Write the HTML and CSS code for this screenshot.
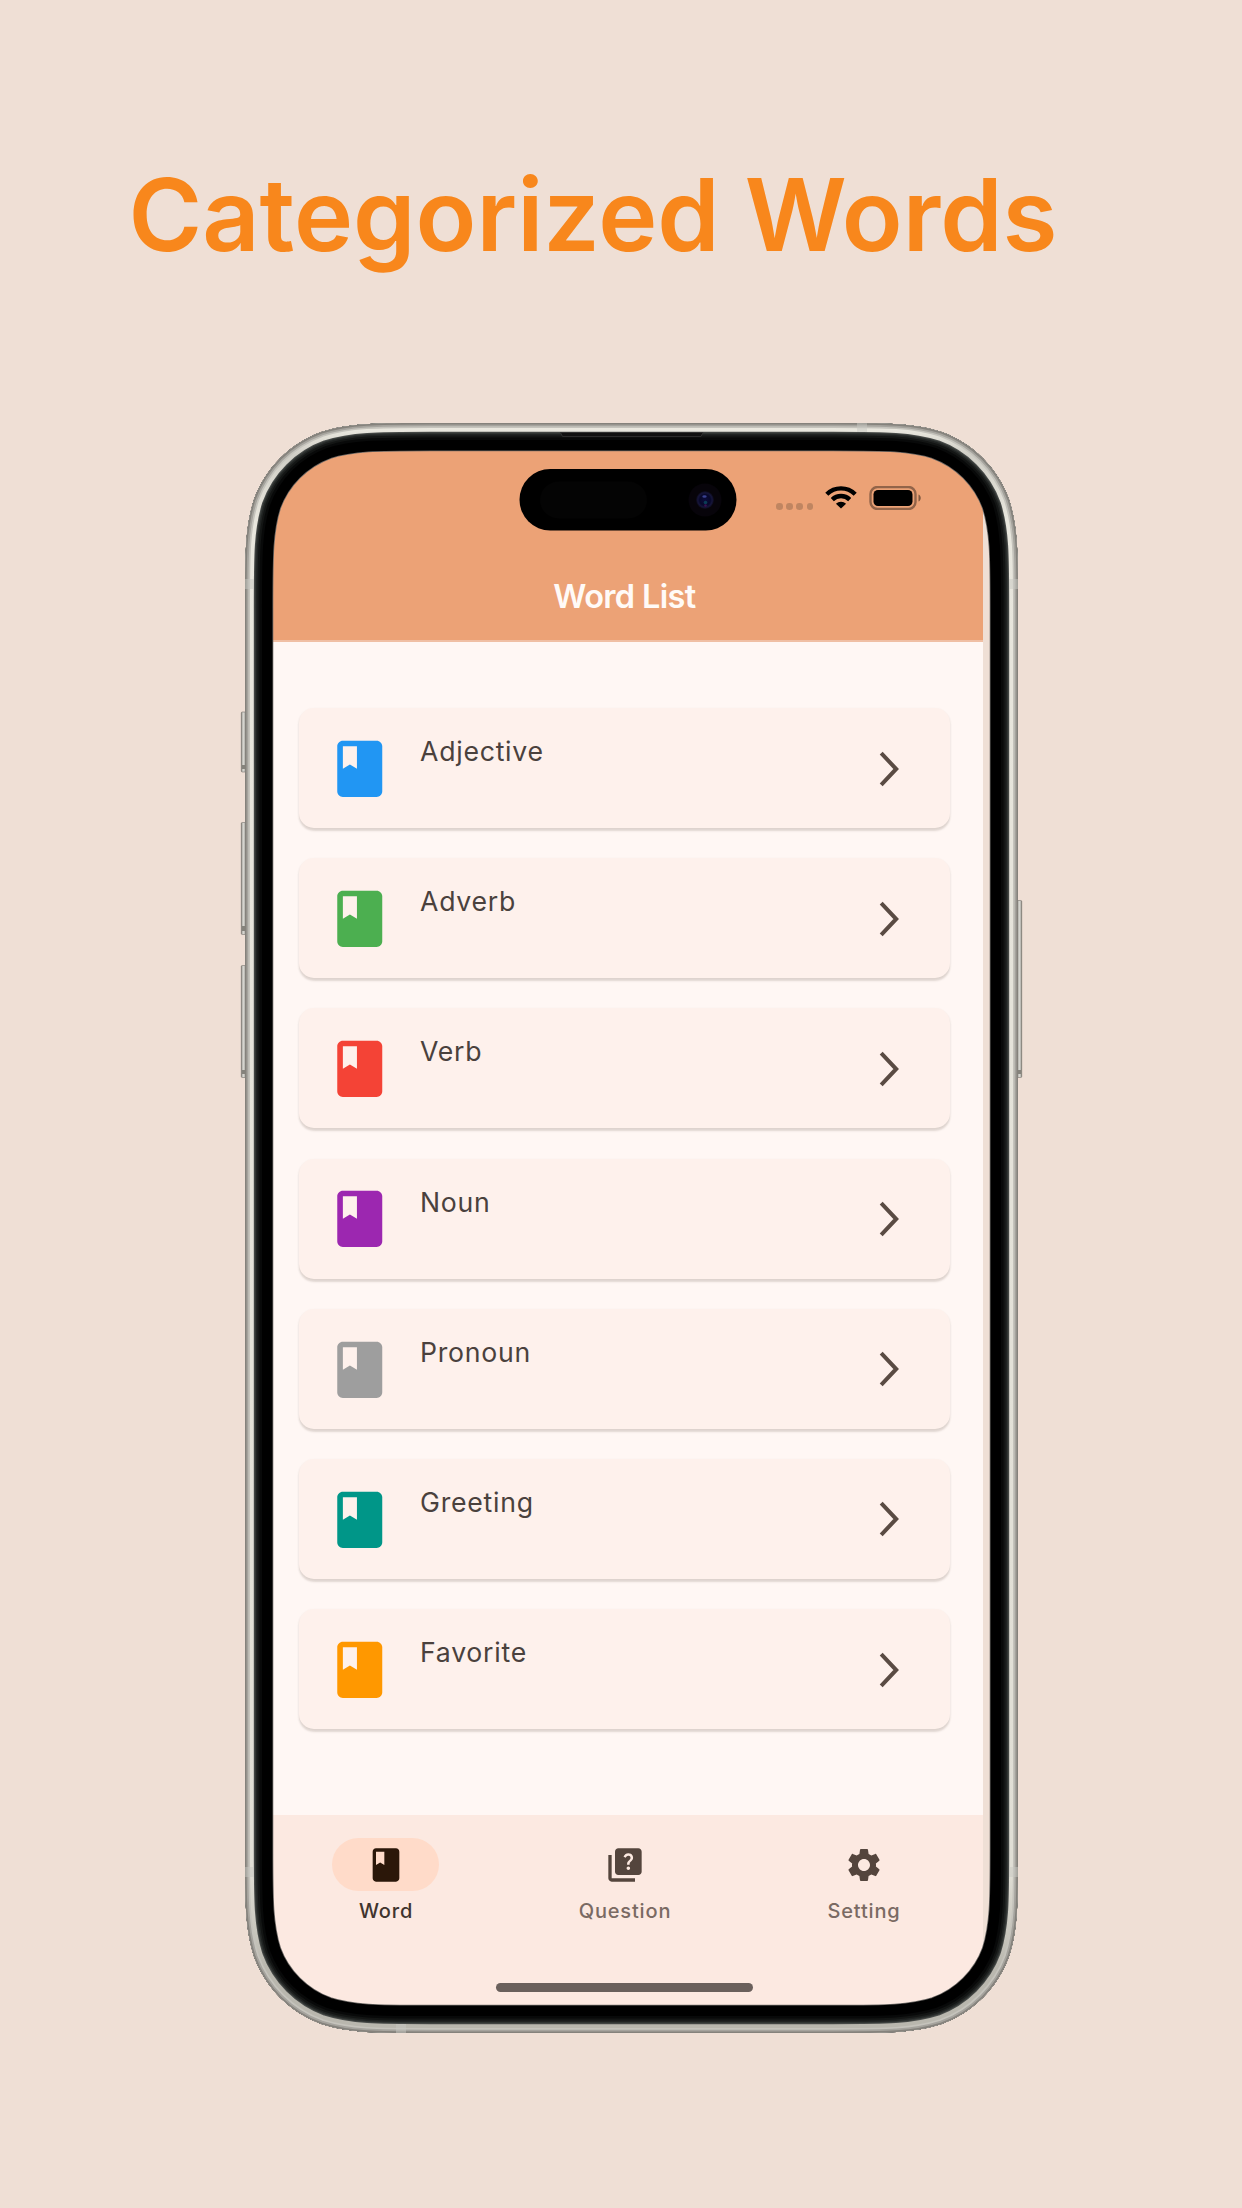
FILE: index.html
```html
<!DOCTYPE html>
<html lang="en">
<head>
<meta charset="utf-8">
<title>Categorized Words</title>
<link rel="stylesheet" href="styles.css">
</head>
<body>
<svg width="0" height="0" class="defs" aria-hidden="true">
  <symbol id="book" viewBox="0 0 24 24"><path d="M18 2H6c-1.1 0-2 .9-2 2v16c0 1.1.9 2 2 2h12c1.1 0 2-.9 2-2V4c0-1.1-.9-2-2-2zM6 4h5v8l-2.5-1.5L6 12V4z"/></symbol>
  <symbol id="chevron" viewBox="0 0 20 36"><path d="M2.2 2.2 17.2 18 2.2 33.8" fill="none" stroke="currentColor" stroke-width="4"/></symbol>
</svg>
<h1 class="headline">Categorized Words</h1>
<div class="phone">
  <div class="app">
    <header class="app-bar">
      <div class="status">
        <span class="cell"><i></i><i></i><i></i><i></i></span>
        <svg class="wifi" viewBox="0 0 32 24"><g fill="none" stroke="#000" stroke-width="4.4"><path d="M1.8 9.2a20.3 20.3 0 0 1 28.4 0"/><path d="M7.3 14.6a12.4 12.4 0 0 1 17.4 0"/></g><path d="M16 23.6 10.9 18.7a7.4 7.4 0 0 1 10.2 0z"/></svg>
        <svg class="battery" viewBox="0 0 52 24"><rect x="1.500" y="1" width="45" height="22" rx="7" fill="none" stroke="#000" stroke-opacity=".38" stroke-width="2.400"/><rect x="4.500" y="4" width="39" height="16" rx="4.500"/><path d="M49.500 8.500c3 1.200 3 5.800 0 7z" fill-opacity=".45"/></svg>
      </div>
      <h2 class="app-title">Word List</h2>
    </header>
    <main class="list">
      <div class="card"><svg class="book blue"><use href="#book"/></svg><span class="name">Adjective</span><svg class="chevron"><use href="#chevron"/></svg></div>
      <div class="card"><svg class="book green"><use href="#book"/></svg><span class="name">Adverb</span><svg class="chevron"><use href="#chevron"/></svg></div>
      <div class="card"><svg class="book red"><use href="#book"/></svg><span class="name">Verb</span><svg class="chevron"><use href="#chevron"/></svg></div>
      <div class="card"><svg class="book purple"><use href="#book"/></svg><span class="name">Noun</span><svg class="chevron"><use href="#chevron"/></svg></div>
      <div class="card"><svg class="book grey"><use href="#book"/></svg><span class="name">Pronoun</span><svg class="chevron"><use href="#chevron"/></svg></div>
      <div class="card"><svg class="book teal"><use href="#book"/></svg><span class="name">Greeting</span><svg class="chevron"><use href="#chevron"/></svg></div>
      <div class="card"><svg class="book orange"><use href="#book"/></svg><span class="name">Favorite</span><svg class="chevron"><use href="#chevron"/></svg></div>
    </main>
    <nav class="tabs">
      <div class="tab active"><span class="pill"><svg class="tab-icon"><use href="#book"/></svg></span><span>Word</span></div>
      <div class="tab"><span class="pill"><svg class="tab-icon" viewBox="0 0 24 24"><path d="M4 6H2v14c0 1.100.9 2 2 2h14v-2H4V6z"/><path d="M20 2H8c-1.100 0-2 .9-2 2v12c0 1.100.9 2 2 2h12c1.100 0 2-.9 2-2V4c0-1.100-.9-2-2-2zm-5.990 13c-.590 0-1.050-.470-1.050-1.050 0-.590.470-1.040 1.050-1.040.590 0 1.040.450 1.040 1.040-.010.580-.450 1.050-1.040 1.050zm2.500-6.170c-.630.930-1.230 1.210-1.560 1.810-.130.240-.180.400-.180 1.180h-1.520c0-.410-.060-1.080.260-1.650.410-.730 1.180-1.160 1.630-1.800.480-.680.210-1.940-1.140-1.940-.880 0-1.320.670-1.500 1.230l-1.370-.570C11.510 5.960 12.520 5 13.990 5c1.230 0 2.080.560 2.510 1.260.370.610.580 1.730.010 2.570z"/></svg></span><span>Question</span></div>
      <div class="tab"><span class="pill"><svg class="tab-icon" viewBox="0 0 24 24"><path d="M19.140 12.940c.040-.300.060-.610.060-.940 0-.320-.020-.640-.070-.940l2.030-1.580c.180-.140.230-.410.120-.610l-1.920-3.320c-.120-.220-.370-.290-.590-.220l-2.390.960c-.500-.380-1.030-.700-1.620-.940l-.360-2.540c-.040-.240-.240-.410-.480-.410h-3.840c-.240 0-.430.170-.470.410l-.360 2.540c-.590.240-1.130.570-1.620.940l-2.390-.960c-.220-.080-.470 0-.590.220L2.740 8.870c-.120.210-.080.470.120.610l2.030 1.580c-.050.300-.090.630-.090.940s.020.640.070.940l-2.030 1.580c-.180.140-.230.410-.120.610l1.920 3.320c.120.220.370.290.590.220l2.390-.960c.500.380 1.030.700 1.620.940l.360 2.540c.050.240.240.410.480.410h3.840c.240 0 .440-.170.470-.410l.360-2.540c.590-.240 1.130-.560 1.620-.940l2.390.960c.220.080.470 0 .590-.220l1.920-3.320c.120-.220.070-.470-.120-.610l-2.010-1.580zM12 15.600c-1.980 0-3.600-1.620-3.600-3.600s1.620-3.600 3.600-3.600 3.600 1.620 3.600 3.600-1.620 3.600-3.600 3.600z"/></svg></span><span>Setting</span></div>
    </nav>
    <div class="home"></div>
  </div>
  <svg class="frame" viewBox="-5 0 783 1610">
    <defs>
      <path id="body" d="M184.970 0H588.030C641.290 0 667.920 0 696.590 9.060C727.890 20.460 752.540 45.110 763.940 76.410C773 105.080 773 131.710 773 184.970V1425.030C773 1478.290 773 1504.920 763.940 1533.590C752.540 1564.890 727.890 1589.540 696.590 1600.940C667.920 1610 641.290 1610 588.030 1610H184.970C131.710 1610 105.080 1610 76.410 1600.940C45.110 1589.540 20.460 1564.890 9.060 1533.590C0 1504.920 0 1478.290 0 1425.030V184.970C0 131.710 0 105.080 9.060 76.410C20.460 45.110 45.110 20.460 76.410 9.060C105.080 0 131.710 0 184.970 0Z"/>
      <clipPath id="outline"><use href="#body"/></clipPath>
      <linearGradient id="steel" gradientUnits="userSpaceOnUse" x1="0" y1="0" x2="0" y2="1610"><stop offset="0" stop-color="#efede4"/><stop offset=".02" stop-color="#d0cec6"/><stop offset=".06" stop-color="#e8e6dd"/><stop offset=".9" stop-color="#e0ded5"/><stop offset=".96" stop-color="#b9b7ae"/></linearGradient>
      <linearGradient id="key" x1="0" y1="0" x2="1" y2="0"><stop offset="0" stop-color="#77756f"/><stop offset=".35" stop-color="#dfded8"/><stop offset="1" stop-color="#96958e"/></linearGradient>
      <linearGradient id="key-r" x1="1" y1="0" x2="0" y2="0"><stop offset="0" stop-color="#77756f"/><stop offset=".35" stop-color="#dfded8"/><stop offset="1" stop-color="#96958e"/></linearGradient>
      <radialGradient id="lens"><stop offset="0" stop-color="#0c0c3c"/><stop offset=".6" stop-color="#08082a"/><stop offset=".8" stop-color="#16153a"/><stop offset="1" stop-color="#0a0814"/></radialGradient>
    </defs>
    <g fill="url(#key)" stroke="#77746e" stroke-width=".6">
      <rect x="-3.700" y="289" width="5" height="60" rx="1"/><rect x="-3.700" y="399.500" width="5" height="112" rx="1"/><rect x="-3.700" y="542.500" width="5" height="112" rx="1"/>
      <rect x="771.700" y="477.500" width="5" height="177" rx="1" fill="url(#key-r)"/>
    </g>
    <g fill="#85837c"><rect x="-3" y="342" width="3" height="4"/><rect x="-3" y="503" width="3" height="5"/><rect x="-3" y="647" width="3" height="4"/><rect x="773" y="647" width="3" height="4"/></g>
    <g clip-path="url(#outline)" fill="none">
      <use href="#body" stroke="#6b6865" stroke-width="56.600"/>
      <use href="#body" stroke="#000" stroke-width="55"/>
      <use href="#body" stroke="#080909" stroke-width="34"/>
      <use href="#body" stroke="#131514" stroke-width="29"/>
      <use href="#body" stroke="#202322" stroke-width="25"/>
      <use href="#body" stroke="#303432" stroke-width="22"/>
      <use href="#body" stroke="#474a48" stroke-width="19.600"/>
      <use href="#body" stroke="url(#steel)" stroke-width="17.600"/>
      <use href="#body" stroke="#c5c3bc" stroke-width="10"/>
      <use href="#body" stroke="#a5a39d" stroke-width="6.600"/>
      <use href="#body" stroke="#85827c" stroke-width="3"/>
      <g fill="#c8c7c1" fill-opacity=".5"><rect x="0" y="156" width="9" height="10"/><rect x="764" y="156" width="9" height="10"/><rect x="0" y="1444" width="9" height="10"/><rect x="764" y="1444" width="9" height="10"/><rect x="612" y="0" width="10" height="9"/><rect x="151" y="1601" width="10" height="9"/></g>
    </g>
    <path d="M315.500 9.500H458l-2 4H317.500z" fill="#111" stroke="#333" stroke-width=".8"/>
    <rect x="274.500" y="46" width="217" height="61.500" rx="30.750" fill="#000"/>
    <rect x="295" y="58.500" width="107" height="37" rx="18.500" fill="#040404"/>
    <circle cx="460" cy="77" r="16.500" fill="#07040a"/><circle cx="460" cy="77" r="9" fill="url(#lens)"/>
    <ellipse cx="459.500" cy="73.500" rx="2.200" ry="1.200" fill="#3a4290"/><circle cx="460.500" cy="79.500" r="1.800" fill="#0a3c55"/><circle cx="460.500" cy="82.500" r="1.300" fill="#3a1050"/>
  </svg>
</div>
</body>
</html>
```
FILE: styles.css
```css
* { box-sizing: border-box; }
body {
  margin: 0;
  width: 1242px;
  height: 2208px;
  overflow: hidden;
  background: #efdfd5;
  font-family: Inter, "Liberation Sans", sans-serif;
  display: flex;
  flex-direction: column;
}
.defs { display: none; }
.headline {
  margin: 0;
  padding: 155px 0 0 128.500px;
  height: 423px;
  font-size: 100px;
  line-height: 120px;
  font-weight: 600;
  color: #f8871c;
  white-space: nowrap;
}
.phone {
  position: relative;
  width: 773px;
  height: 1610px;
  margin-left: 245px;
  padding: 26px 0 0 21px;
}
.frame {
  position: absolute;
  left: -5px;
  top: 0;
  width: 783px;
  height: 1610px;
}
.app {
  width: 717px;
  height: 1566px;
  border-radius: 40px 40px 70px 70px;
  overflow: hidden;
  background: #fff7f4;
  display: flex;
  flex-direction: column;
}
.app-bar {
  height: 193px;
  flex: none;
  background: #eca276;
  border-bottom: 2px solid #f0bfa4;
}
.status {
  height: 98px;
  padding: 36px 62px 0 0;
  display: flex;
  justify-content: flex-end;
  align-items: flex-start;
}
.cell {
  display: flex;
  gap: 3.600px;
  padding-top: 18px;
  margin-right: 12px;
}
.cell i {
  width: 6.500px;
  height: 6.500px;
  border-radius: 50%;
  background: #bf8561;
}
.wifi { width: 32px; height: 24px; margin-right: 12px; }
.battery { width: 52px; height: 24px; margin-top: 1px; }
.app-title {
  margin: 0;
  padding-top: 30px;
  text-align: center;
  font-size: 32.500px;
  line-height: 40px;
  font-weight: 600;
  letter-spacing: -0.650px;
  color: #fffaf7;
}
.list {
  height: 1173px;
  flex: none;
  padding: 66px 33.500px 0 33px;
  display: flex;
  flex-direction: column;
  gap: 30.200px;
}
.card {
  height: 120px;
  flex: none;
  border-radius: 15px;
  background: #fef1ec;
  box-shadow: 0 2.500px 2px rgba(80, 60, 50, .16), 0 1px 3px rgba(80, 60, 50, .06);
  display: flex;
  align-items: center;
  padding: 1px 51px 0 26.500px;
}
.book { width: 67.500px; height: 67.500px; fill: currentColor; }
.blue { color: #2196f3; }
.green { color: #4caf50; }
.red { color: #f44336; }
.purple { color: #9c27b0; }
.grey { color: #9e9e9e; }
.teal { color: #009688; }
.orange { color: #ff9800; }
.name {
  flex: 1;
  align-self: flex-start;
  padding: 26px 0 0 27px;
  font-size: 26.670px;
  line-height: 32px;
  letter-spacing: 0.740px;
  color: #4a413d;
}
.chevron { width: 20px; height: 36px; color: #5a4b43; }
.tabs {
  height: 147px;
  flex: none;
  background: #fce9e1;
  display: flex;
  padding-top: 23px;
}
.tab {
  flex: 1;
  display: flex;
  flex-direction: column;
  align-items: center;
  gap: 8px;
  font-size: 20px;
  line-height: 24px;
  font-weight: 500;
  letter-spacing: 0.830px;
  color: #7a6a63;
}
.tab.active { color: #40342e; }
.tab span + span { padding-left: 1px; }
.pill {
  width: 106.670px;
  height: 53.300px;
  border-radius: 27px;
  display: flex;
  align-items: center;
  justify-content: center;
}
.active .pill { background: #ffdbc9; }
.tab-icon { width: 40px; height: 40px; fill: #54453d; }
.active .tab-icon { fill: #2b1709; }
.home {
  flex: 1;
  background: #fce9e1;
  padding-top: 21px;
}
.home::before {
  content: "";
  display: block;
  width: 257px;
  height: 8.500px;
  margin: 0 auto;
  border-radius: 5px;
  background: #6a605c;
}
```
